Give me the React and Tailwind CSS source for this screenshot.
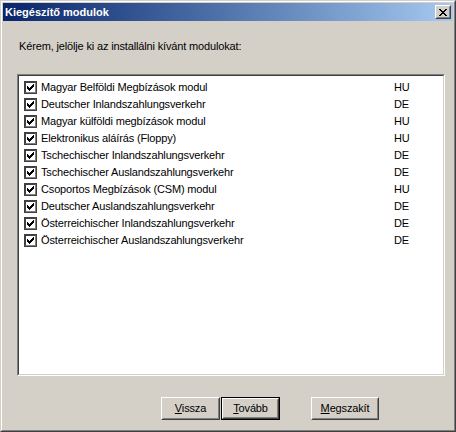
import React from "react";

const rows = [
  ["Magyar Belföldi Megbízások modul", "HU"],
  ["Deutscher Inlandszahlungsverkehr", "DE"],
  ["Magyar külföldi megbízások modul", "HU"],
  ["Elektronikus aláírás (Floppy)", "HU"],
  ["Tschechischer Inlandszahlungsverkehr", "DE"],
  ["Tschechischer Auslandszahlungsverkehr", "DE"],
  ["Csoportos Megbízások (CSM) modul", "HU"],
  ["Deutscher Auslandszahlungsverkehr", "DE"],
  ["Österreichischer Inlandszahlungsverkehr", "DE"],
  ["Österreichischer Auslandszahlungsverkehr", "DE"],
];

const checkPix = [
  "......#",
  ".....##",
  "#...###",
  "##.###.",
  "#####..",
  ".###...",
  "..#....",
];

const xPix = [
  "##....##",
  ".##..##.",
  "..####..",
  "...##...",
  "..####..",
  ".##..##.",
  "##....##",
];

function Pixels({ map, w, h }) {
  const rects = [];
  map.forEach((row, y) =>
    row.split("").forEach((c, x) => {
      if (c === "#") rects.push(<rect key={`${x}-${y}`} x={x} y={y} width="1" height="1" />);
    })
  );
  return (
    <svg width={w} height={h} viewBox={`0 0 ${w} ${h}`} shapeRendering="crispEdges" fill="#000">
      {rects}
    </svg>
  );
}

function Checkbox() {
  return (
    <div className="w-[13px] h-[13px] shrink-0 border border-[#404040]">
      <div className="w-full h-full bg-white border border-t-[#404040] border-l-[#404040] border-r-[#808080] border-b-[#808080] flex items-center justify-center">
        <Pixels map={checkPix} w={7} h={7} />
      </div>
    </div>
  );
}

function Btn({ u, rest, w, def }) {
  const inner = (
    <div className="h-full border border-t-white border-l-white border-r-[#404040] border-b-[#404040]">
      <div className="h-full border border-t-[#d4d0c8] border-l-[#d4d0c8] border-r-[#808080] border-b-[#808080] flex items-center justify-center text-black">
        <span>
          <span className="underline underline-offset-[1px]">{u}</span>
          {rest}
        </span>
      </div>
    </div>
  );
  if (def) {
    return <div className={`h-[23px] border border-black ${w}`}>{inner}</div>;
  }
  return <div className={`h-[23px] ${w}`}>{inner}</div>;
}

export default function App() {
  return (
    <div
      className="w-[456px] h-[432px] bg-[#d4d0c8] border border-t-[#d4d0c8] border-l-[#d4d0c8] border-r-[#404040] border-b-[#404040] text-[11px] leading-[13px] text-black tracking-[-0.15px]"
      style={{ fontFamily: '"Liberation Sans", Arial, sans-serif' }}
    >
      <div className="h-full flex flex-col p-px border border-t-white border-l-white border-r-[#808080] border-b-[#808080]">
        <div className="h-[18px] shrink-0 flex items-center justify-between pl-[2px] pr-[2px] bg-gradient-to-r from-[#0a246a] to-[#a6caf0]">
          <span className="font-bold text-white text-[11px] tracking-normal">Kiegészítő modulok</span>
          <div className="w-[16px] h-[14px] bg-[#d4d0c8] border border-t-white border-l-white border-r-[#404040] border-b-[#404040]">
            <div className="w-full h-full border border-t-[#d4d0c8] border-l-[#d4d0c8] border-r-[#808080] border-b-[#808080] flex items-center justify-center">
              <Pixels map={xPix} w={8} h={7} />
            </div>
          </div>
        </div>

        <div className="pt-[19px] pl-[16px]">Kérem, jelölje ki az installálni kívánt modulokat:</div>

        <div className="mt-[21px] ml-[14px] w-[428px] h-[302px] border border-t-[#808080] border-l-[#808080] border-r-white border-b-white">
          <div className="w-full h-full bg-white border border-t-[#404040] border-l-[#404040] border-r-[#d4d0c8] border-b-[#d4d0c8] pt-[3px] pl-[5px]">
            {rows.map(([name, code]) => (
              <div key={name} className="h-[17px] flex items-center">
                <Checkbox />
                <span className="ml-[4px] w-[353px] whitespace-nowrap">{name}</span>
                <span>{code}</span>
              </div>
            ))}
          </div>
        </div>

        <div className="mt-[21px] ml-[158px] flex">
          <Btn u="V" rest="issza" w="w-[59px]" />
          <div className="ml-px">
            <Btn u="T" rest="ovább" w="w-[59px]" def />
          </div>
          <div className="ml-[31px]">
            <Btn u="M" rest="egszakít" w="w-[68px]" />
          </div>
        </div>
      </div>
    </div>
  );
}
